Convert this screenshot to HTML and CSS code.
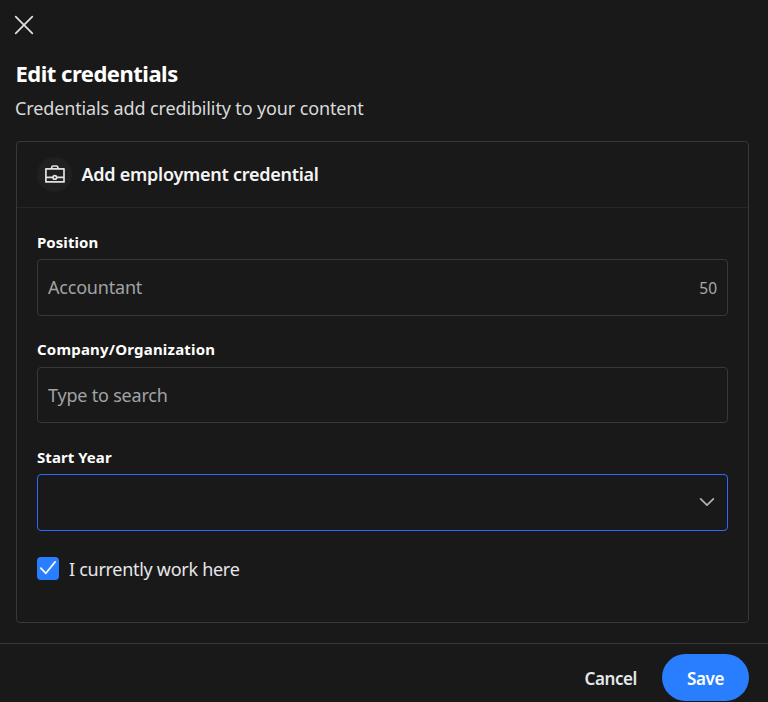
FILE: index.html
```html
<!DOCTYPE html>
<html lang="en">
<head>
<meta charset="utf-8">
<title>Edit credentials</title>
<link rel="stylesheet" href="styles.css">
</head>
<body>
<main class="dialog">
  <header class="intro">
    <button class="close" aria-label="Close"><svg width="20" height="20" viewBox="0 0 20 20"><path d="M1.7 1.7 18.3 18.3M18.3 1.7 1.7 18.3"/></svg></button>
    <h1 class="title">Edit credentials</h1>
    <p class="subtitle">Credentials add credibility to your content</p>
  </header>
  <section class="card">
    <div class="card-header">
      <span class="badge"><svg width="22" height="20" viewBox="0 0 22 20"><path d="M1.9 4.8H20V17.9H1.9zM7.7 4.6V3.5Q7.7 2 9.2 2H12.4Q13.9 2 13.9 3.5V4.6M1.9 13.4H8.8M12.8 13.4H20"/><circle cx="10.8" cy="13.4" r="1.8"/></svg></span>
      <h2 class="card-title">Add employment credential</h2>
    </div>
    <div class="fields">
      <label class="label">Position</label>
      <div class="input"><span class="placeholder">Accountant</span><span class="count">50</span></div>
      <label class="label company">Company/Organization</label>
      <div class="input short"><span class="placeholder">Type to search</span></div>
      <label class="label">Start Year</label>
      <div class="input focused"><svg class="chevron" width="16" height="10" viewBox="0 0 16 10"><path d="M1.6 1.8 8 8.1 14.4 1.8"/></svg></div>
      <div class="check-row">
        <span class="checkbox"><svg width="22" height="23" viewBox="0 0 22 23"><path d="M3.8 11.2 8.9 16.3 18.1 4.9"/></svg></span>
        <span class="check-label">I currently work here</span>
      </div>
    </div>
  </section>
  <footer class="footer">
    <button class="cancel">Cancel</button>
    <button class="save">Save</button>
  </footer>
</main>
</body>
</html>
```
FILE: styles.css
```css
* { box-sizing: border-box; }
body {
  margin: 0;
  background: #191919;
  color: #e6e7e8;
  font-family: "Noto Sans", "Open Sans", sans-serif;
  font-size: 18px;
}
h1, h2, p { margin: 0; }
button { border: 0; padding: 0; background: none; color: inherit; font: inherit; letter-spacing: inherit; }
svg { display: block; fill: none; stroke: #e0e1e2; stroke-width: 1.7; stroke-linecap: round; stroke-linejoin: round; }
.dialog { height: 702px; overflow: hidden; display: flex; flex-direction: column; }
.intro { height: 141px; padding: 15px 16px 0 14px; }
.close { display: block; width: 20px; height: 20px; }
.title { margin: 22px 0 0 1.5px; color: #fff; font-size: 22px; font-weight: 700; line-height: 32px; letter-spacing: -0.5px; }
.subtitle { margin: 6px 0 0 1px; line-height: 26px; color: #d9dadb; white-space: nowrap; letter-spacing: -0.13px; }
.card { height: 482px; margin: 0 19px 0 16px; border: 1px solid #393839; border-radius: 4px; }
.card-header { height: 66px; padding-left: 20px; display: flex; align-items: center; gap: 9.5px; border-bottom: 1px solid #272727; }
.badge { width: 35px; height: 35px; padding-bottom: 1px; display: flex; align-items: center; justify-content: center; border-radius: 50%; background: #202020; }
.card-title { padding-bottom: 2px; color: #f5f5f5; font-size: 18px; font-weight: 600; line-height: 26px; letter-spacing: -0.26px; }
.fields { padding: 22px 20px 0; display: flex; flex-direction: column; }
.label { height: 29px; color: #fff; font-size: 15px; font-weight: 700; line-height: 24px; letter-spacing: 0.05px; }
.label.company { line-height: 22px; letter-spacing: 0.2px; }
.input { height: 57px; margin-bottom: 22px; padding: 0 10px 1px; display: flex; align-items: center; justify-content: space-between; border: 1px solid #393839; border-radius: 4px; }
.input.short { height: 56px; padding-bottom: 0; }
.input.focused { margin-bottom: 26px; justify-content: flex-end; padding-right: 12px; padding-bottom: 2px; border-color: #2e69ff; }
.placeholder { color: #a2a3a5; letter-spacing: -0.2px; }
.count { padding-top: 2px; color: #a8a9aa; font-size: 15.5px; }
.chevron { stroke: #b1b3b6; }
.check-row { display: flex; align-items: center; gap: 10px; }
.checkbox { width: 22px; height: 23px; border-radius: 4px; background: #287eff; }
.checkbox svg { stroke: #fff; }
.check-label { height: 23px; line-height: 25px; letter-spacing: -0.29px; }
.footer { flex: 1; margin-top: 20px; border-top: 1px solid #393839; padding: 10px 19px 0; display: flex; justify-content: flex-end; align-items: flex-start; gap: 25px; font-size: 17px; font-weight: 600; letter-spacing: -0.4px; }
.cancel { height: 47px; padding-top: 2px; }
.save { width: 87px; height: 47px; padding-top: 2px; border-radius: 24px; background: #287eff; color: #fff; }
```
